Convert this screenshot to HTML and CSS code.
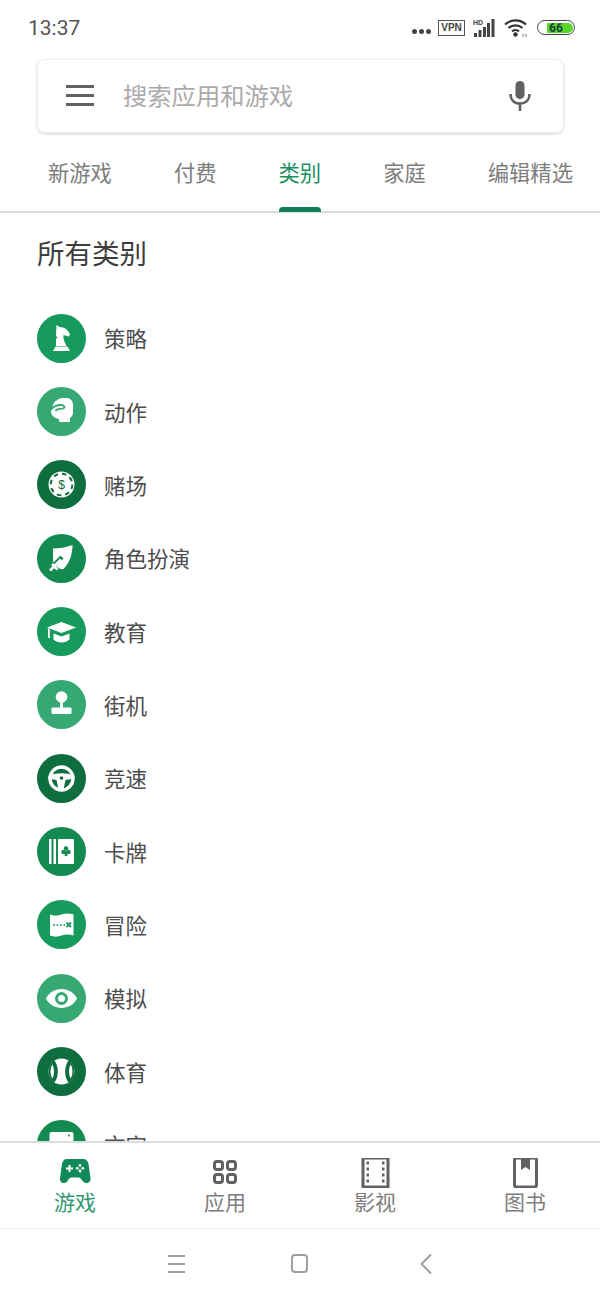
FILE: index.html
```html
<!DOCTYPE html>
<html>
<head>
<meta charset="UTF-8">
  <meta name="viewport" content="width=device-width, initial-scale=1.0">
  <title>类别</title>
  <link rel="stylesheet" href="styles.css">
</head>
<body>
<div class="page">

  <!-- status bar -->
  <div class="status">
    <span class="time">13:37</span>
    <div class="status-icons">
      <span class="dots"><i></i><i></i><i></i></span>
      <span class="vpn">VPN</span>
      <svg class="signal" width="22" height="20" viewBox="0 0 22 20">
        <text x="0" y="6.5" class="hd">HD</text>
        <rect x="1" y="15" width="3" height="4" fill="#444"/>
        <rect x="5.5" y="12" width="3" height="7" fill="#444"/>
        <rect x="10" y="9" width="3" height="10" fill="#444"/>
        <rect x="14" y="5" width="3" height="14" fill="#444"/>
        <rect x="18.5" y="1" width="3" height="18" fill="#444"/>
      </svg>
      <svg class="wifi" width="24" height="20" viewBox="0 0 24 20">
        <path d="M1 6.5C7 1 16 1 22 6.5M4.5 10C8.5 6.5 14.5 6.5 18.5 10M8 13.3C10 11.6 13 11.6 15 13.3" fill="none" stroke="#333" stroke-width="2.2"/>
        <circle cx="11.5" cy="16.5" r="2.2" fill="#333"/>
        <path d="M19 16v3M22 16v3" stroke="#777" stroke-width="1"/>
      </svg>
      <span class="battery"><span class="battery-fill">66</span></span>
    </div>
  </div>

  <!-- search -->
  <div class="search">
    <span class="burger"><i></i><i></i><i></i></span>
    <span class="placeholder">搜索应用和游戏</span>
    <svg class="mic" width="24" height="32" viewBox="0 0 24 32">
      <rect x="7.5" y="1" width="9" height="18" rx="4.5" fill="#616161"/>
      <path d="M2.5 14c0 6 4 9.500 9.500 9.500s9.500-3.500 9.500-9.500" fill="none" stroke="#616161" stroke-width="2.600"/>
      <rect x="10.700" y="23" width="2.600" height="8" fill="#616161"/>
    </svg>
  </div>

  <!-- tabs -->
  <div class="tabs">
    <span class="tab">新游戏</span>
    <span class="tab">付费</span>
    <span class="tab tab-on">类别</span>
    <span class="tab">家庭</span>
    <span class="tab">编辑精选</span>
  </div>

  <div class="content">
    <h1 class="title">所有类别</h1>

    <div class="row">
      <svg class="ico c1" viewBox="0 0 49 49">
        <path d="M19.500 11l3 2c5 0 9 3 10.500 7.500l-1.500 2-5-1.500c-.5 3 .5 6 2.500 9.500v1.500H19v-7l1.500-1.500-1.500-1.500z" fill="#fff"/>
        <path d="M18.500 32.500h12l2.500 4.500H16z" fill="#fff"/>
      </svg>
      <span class="name">策略</span>
    </div>

    <div class="row">
      <svg class="ico c2" viewBox="0 0 49 49">
        <path d="M19 14c2-2 4-3 7-3h4c3 0 6 3 6 6v9c0 2-1.500 4-3 5v4H22v-3c-4-.5-8-3.500-8-7.500 0-1.500.5-3 1.500-4.500 0-2.500 1.500-4.500 3.500-6.500z" fill="#fff"/>
        <path d="M13.500 22.500c2.500-2.500 6.500-4.500 10.500-4.500 3.500 0 4.500 2.500 2 3.500-2.500 1-6-.5-7.500 2.500" fill="none" stroke="#35a873" stroke-width="1.800"/>
      </svg>
      <span class="name">动作</span>
    </div>

    <div class="row">
      <svg class="ico c3" viewBox="0 0 49 49">
        <circle cx="24.500" cy="24.500" r="13" fill="#fff"/>
        <circle cx="24.500" cy="24.500" r="10.800" fill="none" stroke="#0f6e3f" stroke-width="2" stroke-dasharray="4.500 4"/>
        <text x="24.500" y="29" class="dollar">$</text>
      </svg>
      <span class="name">赌场</span>
    </div>

    <div class="row">
      <svg class="ico c4" viewBox="0 0 49 49">
        <path d="M35.500 11c0 9-3 18-9 24-3 .5-5-.5-7-3l7-7.500-3-3-7 7c-.5-1-.5-2-.5-3V14.500c6 0 13-1 19.500-3.500z" fill="#fff"/>
        <path d="M13 36.500l11-11" stroke="#fff" stroke-width="2.600"/>
        <path d="M15 30l5.500 5.500" stroke="#fff" stroke-width="2.600"/>
      </svg>
      <span class="name">角色扮演</span>
    </div>

    <div class="row">
      <svg class="ico c1" viewBox="0 0 49 49">
        <path d="M10 20.500L24.500 15 39 20.500 24.500 26z" fill="#fff"/>
        <path d="M16.500 26.500v6c2 2 5 3 8 3s6-1 8-3v-6l-8 3z" fill="#fff"/>
        <path d="M11 21.500h1.800v9.500H11z" fill="#fff"/>
      </svg>
      <span class="name">教育</span>
    </div>

    <div class="row">
      <svg class="ico c2" viewBox="0 0 49 49">
        <circle cx="24.500" cy="17" r="5.800" fill="#fff"/>
        <rect x="23" y="20" width="3" height="9" fill="#fff"/>
        <rect x="14.500" y="27.500" width="20" height="6.500" rx="1" fill="#fff"/>
      </svg>
      <span class="name">街机</span>
    </div>

    <div class="row">
      <svg class="ico c3" viewBox="0 0 49 49">
        <circle cx="24.500" cy="24.500" r="11.500" fill="none" stroke="#fff" stroke-width="3.400"/>
        <path d="M12 21.500c8-3 17-3 25 0l.5 3-9 1.500-2 9.500-2.500 1-2.500-1-2-9.500-9-1.500z" fill="#fff"/>
        <circle cx="24.500" cy="24" r="1.800" fill="#0f6e3f"/>
      </svg>
      <span class="name">竞速</span>
    </div>

    <div class="row">
      <svg class="ico c4" viewBox="0 0 49 49">
        <rect x="12" y="12" width="2.500" height="25" fill="#fff"/>
        <rect x="16.500" y="12" width="2.500" height="25" fill="#fff"/>
        <rect x="21" y="12" width="16" height="25" rx="1" fill="#fff"/>
        <g fill="#138a50">
          <circle cx="29" cy="21.500" r="2.200"/>
          <circle cx="26.500" cy="25" r="2.200"/>
          <circle cx="31.500" cy="25" r="2.200"/>
          <path d="M28.300 24h1.400l.8 5h-3z"/>
        </g>
      </svg>
      <span class="name">卡牌</span>
    </div>

    <div class="row">
      <svg class="ico c1" viewBox="0 0 49 49">
        <path d="M13 14.500c4 1.500 7.500 1.500 11.500 0s8-1.500 12 0v21c-4-1.500-8-1.500-12 0s-7.500 1.500-11.500 0z" fill="#fff"/>
        <path d="M16 25h12" stroke="#1a9a5d" stroke-width="1.600" stroke-dasharray="2 1.500"/>
        <path d="M29.500 22.500l4.500 4.500M34 22.500L29.500 27" stroke="#1a9a5d" stroke-width="1.800"/>
      </svg>
      <span class="name">冒险</span>
    </div>

    <div class="row">
      <svg class="ico c2" viewBox="0 0 49 49">
        <path d="M9 24.500C12 18.500 18 15 24.500 15S37 18.500 40 24.500C37 30.500 31 34 24.500 34S12 30.500 9 24.500z" fill="#fff"/>
        <circle cx="24.500" cy="24.500" r="5" fill="none" stroke="#35a873" stroke-width="3"/>
      </svg>
      <span class="name">模拟</span>
    </div>

    <div class="row">
      <svg class="ico c3" viewBox="0 0 49 49">
        <circle cx="24.500" cy="24.500" r="13" fill="#fff"/>
        <path d="M17.500 13.500c4.500 6 4.500 16 0 22-4-2-6-6.500-6-11s2-9 6-11zM31.500 13.500c-4.500 6-4.500 16 0 22 4-2 6-6.500 6-11s-2-9-6-11z" fill="#0f6e3f"/>
        <path d="M15.500 17.500c2 4 2 10 0 14-1.500-2-2-4.500-2-7s.5-5 2-7zM33.500 17.500c-2 4-2 10 0 14 1.500-2 2-4.500 2-7s-.5-5-2-7z" fill="#fff"/>
      </svg>
      <span class="name">体育</span>
    </div>

    <div class="row">
      <svg class="ico c4" viewBox="0 0 49 49">
        <rect x="12.500" y="12" width="24" height="25" rx="2" fill="#fff"/>
        <circle cx="32" cy="15.500" r="1" fill="#138a50"/>
      </svg>
      <span class="name">文字</span>
    </div>
  </div>

  <!-- bottom nav -->
  <div class="nav">
    <div class="nav-item nav-on">
      <svg width="34" height="30" viewBox="0 0 34 30">
        <path d="M9 1h16c3 0 5 2 5.500 5l2 14c.5 3-1.500 5-4 5-2 0-3.500-1.500-5-3.500-1-1.500-2-2-3.500-2h-6c-1.500 0-2.500.5-3.500 2C9.500 23.500 8 25 6 25c-2.500 0-4.500-2-4-5l2-14C4.500 3 6 1 9 1z" fill="#0f8a58"/>
        <path d="M8 10.500h7M11.500 7v7" stroke="#fff" stroke-width="2"/>
        <g fill="#fff"><circle cx="22" cy="7.500" r="1.400"/><circle cx="22" cy="13" r="1.400"/><circle cx="19.300" cy="10.300" r="1.400"/><circle cx="24.800" cy="10.300" r="1.400"/></g>
      </svg>
      <span class="nav-label">游戏</span>
    </div>
    <div class="nav-item">
      <svg width="34" height="30" viewBox="0 0 34 30">
        <g fill="none" stroke="#616161" stroke-width="3">
          <rect x="6.500" y="3.500" width="8" height="8" rx="2.500"/>
          <rect x="19.500" y="3.500" width="8" height="8" rx="2.500"/>
          <rect x="6.500" y="16.500" width="8" height="8" rx="2.500"/>
          <rect x="19.500" y="16.500" width="8" height="8" rx="2.500"/>
        </g>
      </svg>
      <span class="nav-label">应用</span>
    </div>
    <div class="nav-item">
      <svg width="34" height="30" viewBox="0 0 34 30">
        <rect x="5" y="0" width="25" height="29" fill="none" stroke="#616161" stroke-width="3"/>
        <path d="M11 4h-2.500M11 10h-2.500M11 16h-2.500M11 22h-2.500M26.500 4H24M26.500 10H24M26.500 16H24M26.500 22H24" stroke="#616161" stroke-width="3" transform="translate(0 1)"/>
      </svg>
      <span class="nav-label">影视</span>
    </div>
    <div class="nav-item">
      <svg width="34" height="30" viewBox="0 0 34 30">
        <rect x="6.500" y="0" width="22" height="29" rx="2" fill="none" stroke="#616161" stroke-width="3"/>
        <path d="M13 0h9v12l-4.500-3-4.500 3z" fill="#616161"/>
      </svg>
      <span class="nav-label">图书</span>
    </div>
  </div>

  <!-- system buttons -->
  <div class="sysbar">
    <span class="sys-menu"><i></i><i></i><i></i></span>
    <span class="sys-home"></span>
    <svg width="14" height="22" viewBox="0 0 14 22"><path d="M12 1.500L2.500 11 12 20.500" fill="none" stroke="#9e9e9e" stroke-width="2"/></svg>
  </div>

</div>
</body>
</html>
```

FILE: styles.css
```css
* {
  box-sizing: border-box;
}

body {
  margin: 0;
  padding: 0;
  background: #fff;
  font-family: "Noto Sans CJK SC", "Noto Sans", sans-serif;
  color: #444;
}

.page {
  display: flex;
  flex-direction: column;
  height: 1300px;
  overflow: hidden;
}

/* status bar */
.status {
  display: flex;
  align-items: center;
  justify-content: space-between;
  height: 55px;
  flex: none;
  padding: 0 25px 0 28px;
}

.time {
  font-family: Roboto, sans-serif;
  font-size: 21px;
  color: #555;
}

.status-icons {
  display: flex;
  align-items: center;
  gap: 9px;
}

.dots {
  display: flex;
  gap: 2px;
  margin-top: 8px;
  margin-right: -2px;
}

.dots i {
  width: 5px;
  height: 5px;
  border-radius: 50%;
  background: #444;
}

.vpn {
  width: 27px;
  height: 16px;
  margin-right: -1px;
  border: 1.5px solid #555;
  font: bold 10px/13px "Liberation Sans", sans-serif;
  text-align: center;
  color: #444;
}

.hd {
  font: bold 7px "Liberation Sans", sans-serif;
  fill: #444;
}

.battery {
  display: block;
  width: 38px;
  height: 15px;
  padding: 1.500px 1.500px 1.500px 9px;
  border: 1.500px solid #444;
  border-radius: 8px;
}

.battery-fill {
  display: block;
  height: 100%;
  border-radius: 0 6px 6px 0;
  background: #5bd42c;
  font: bold 12px/10px Roboto, sans-serif;
  color: #143;
  padding-left: 2px;
}

/* search */
.search {
  display: flex;
  align-items: center;
  flex: none;
  height: 74px;
  margin: 4px 36px 0 37px;
  padding: 0 31px 0 28px;
  border-radius: 8px;
  border: 1px solid #eee;
  box-shadow: 0 1px 3px rgba(0, 0, 0, 0.18);
}

.burger {
  display: flex;
  flex-direction: column;
  gap: 6px;
  width: 28px;
  margin-top: -2px;
}

.burger i {
  height: 3px;
  background: #616161;
}

.placeholder {
  flex: 1;
  margin: -3px 0 0 29px;
  font-size: 24.300px;
  color: #aaa;
}

/* tabs */
.tabs {
  display: flex;
  gap: 62px;
  flex: none;
  height: 80px;
  padding-left: 48px;
  border-bottom: 2px solid #ddd;
  white-space: nowrap;
}

.tab {
  height: 79px;
  padding-top: 23px;
  font-size: 21.300px;
  line-height: 32px;
  color: #7d7d7d;
}

.tab-on {
  color: #1d8f63;
  position: relative;
}

.tab-on::after {
  content: "";
  position: absolute;
  left: 0;
  right: 0;
  bottom: 0;
  height: 5px;
  border-radius: 4px 4px 0 0;
  background: #0f7d55;
}

/* list */
.content {
  flex: 1;
  overflow: hidden;
  padding: 19px 0 0 37px;
}

.title {
  margin: 0 0 29.500px;
  font-size: 27.500px;
  line-height: 40px;
  font-weight: 400;
  color: #3d3d3d;
}

.row {
  display: flex;
  align-items: center;
  gap: 18px;
  height: 73.350px;
}

.ico {
  width: 49px;
  height: 49px;
  flex: none;
  border-radius: 50%;
}

.c1 { background: #169a5d; }
.c2 { background: #35a873; }
.c3 { background: #0f6e3f; }
.c4 { background: #138a50; }

.dollar {
  font: 12px "Liberation Sans", sans-serif;
  fill: #0f6e3f;
  text-anchor: middle;
}

.name {
  padding-bottom: 1px;
  font-size: 21.500px;
  color: #4d4d4d;
}

/* bottom nav */
.nav {
  display: flex;
  flex: none;
  height: 88px;
  border-top: 2px solid #ddd;
  border-bottom: 1px solid #eee;
}

.nav-item {
  flex: 1;
  display: flex;
  flex-direction: column;
  align-items: center;
  padding-top: 15px;
}

.nav-label {
  font-size: 21px;
  line-height: 30px;
  margin-top: -2px;
  color: #7d7d7d;
}

.nav-on .nav-label {
  color: #2f9a72;
}

/* system buttons */
.sysbar {
  display: flex;
  align-items: center;
  flex: none;
  height: 71px;
  padding: 0 0 2px 168px;
}

.sys-menu {
  display: flex;
  flex-direction: column;
  gap: 6px;
  width: 17px;
}

.sys-menu i {
  height: 2px;
  background: #9e9e9e;
}

.sys-home {
  width: 17px;
  height: 19px;
  margin: 0 111px 0 106px;
  border: 2px solid #9e9e9e;
  border-radius: 4px;
}
```
